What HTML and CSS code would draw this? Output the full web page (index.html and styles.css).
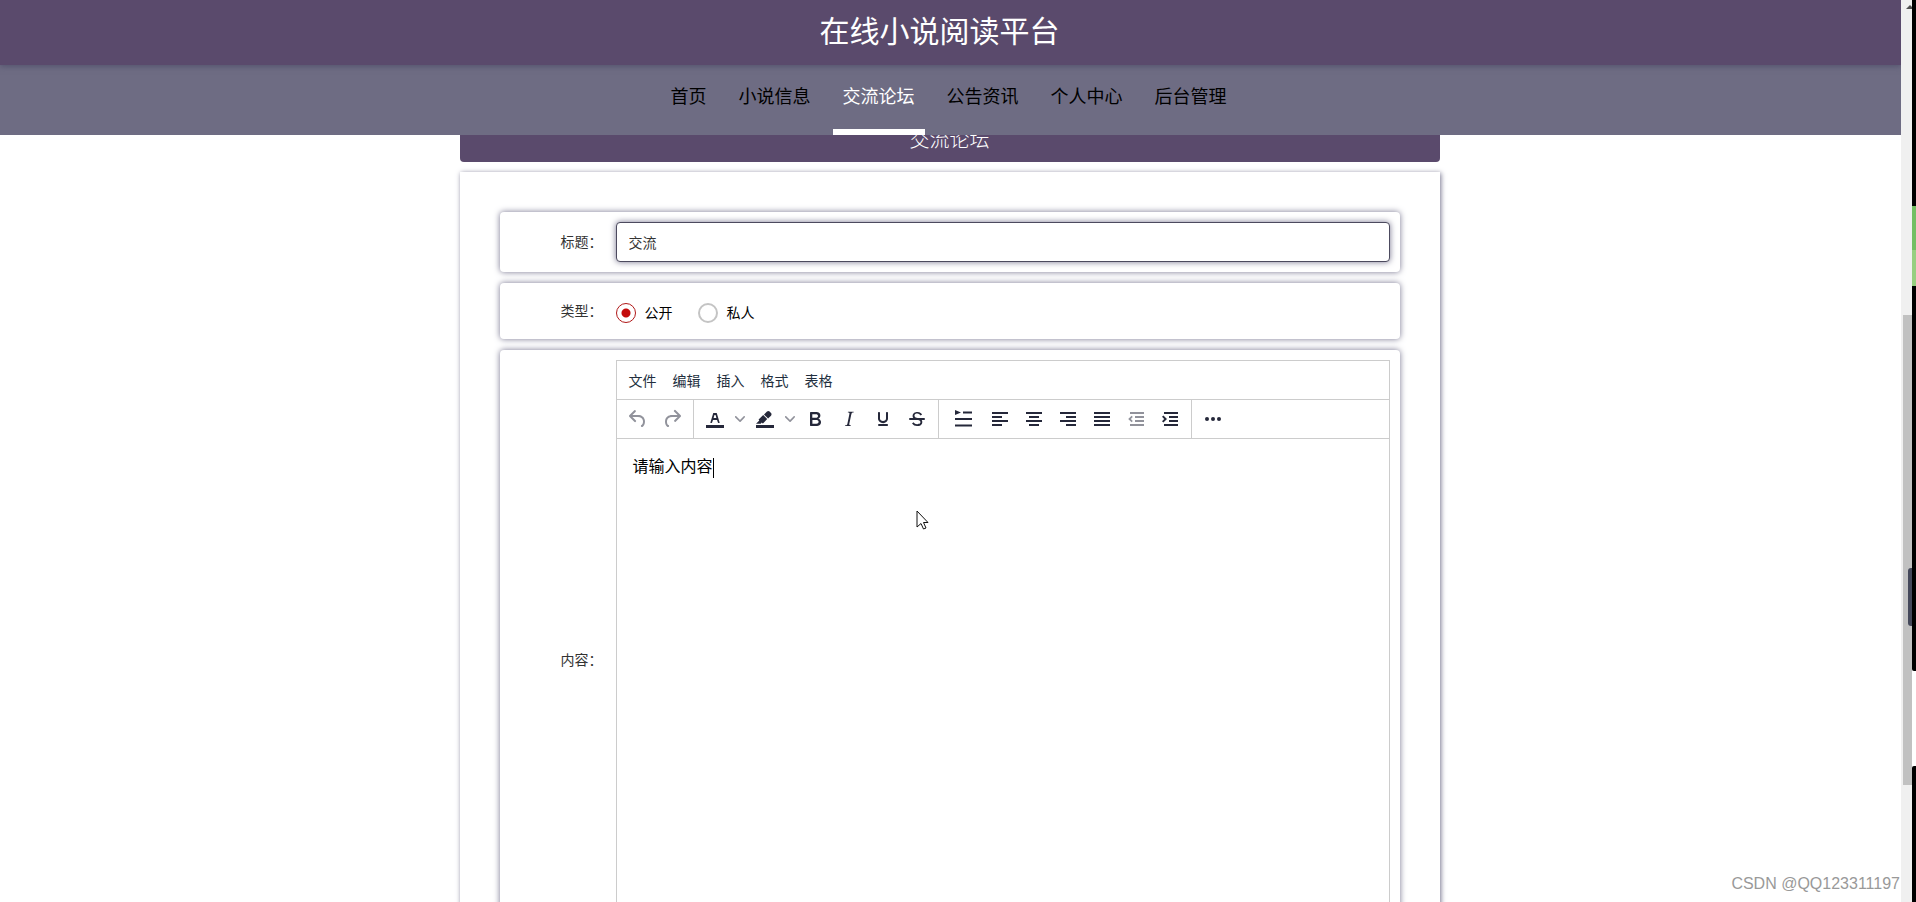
FILE: index.html
```html
<!DOCTYPE html>
<html lang="zh-CN">
<head>
<meta charset="utf-8">
<title>在线小说阅读平台</title>
<link rel="stylesheet" href="styles.css">
</head>
<body>
<div class="window">
  <div class="page">
    <header class="top">
      <h1 class="brand">在线小说阅读平台</h1>
      <nav class="nav">
        <a class="nav-link" href="#">首页</a>
        <a class="nav-link" href="#">小说信息</a>
        <a class="nav-link active" href="#" aria-current="page">交流论坛</a>
        <a class="nav-link" href="#">公告资讯</a>
        <a class="nav-link" href="#">个人中心</a>
        <a class="nav-link" href="#">后台管理</a>
      </nav>
    </header>
    <main class="main">
      <h2 class="banner">交流论坛</h2>
      <form class="card">
        <div class="row">
          <label class="label" for="title">标题：</label>
          <input class="text-input" id="title" type="text" value="交流">
        </div>
        <div class="row" role="radiogroup" aria-labelledby="kind">
          <span class="label" id="kind">类型：</span>
          <div class="radios">
            <label class="radio"><input type="radio" name="kind" checked>公开</label>
            <label class="radio"><input type="radio" name="kind">私人</label>
          </div>
        </div>
        <div class="row">
          <span class="label" id="content-label">内容：</span>
          <div class="editor">
            <div class="menubar">
              <button class="menu" type="button">文件</button>
              <button class="menu" type="button">编辑</button>
              <button class="menu" type="button">插入</button>
              <button class="menu" type="button">格式</button>
              <button class="menu" type="button">表格</button>
            </div>
            <div class="toolbar">
              <div class="group">
                <button class="tool" type="button" aria-label="撤销" disabled><svg class="icon" viewBox="0 0 24 24"><path d="M6.4 8H12c3.7 0 6.2 2 6.8 5.1.6 2.7-.4 5.6-2.3 6.8a1 1 0 0 1-1-1.8c1.1-.6 1.8-2.7 1.4-4.6-.5-2.1-2.1-3.5-4.9-3.5H6.4l3.3 3.3a1 1 0 1 1-1.4 1.4l-5-5a1 1 0 0 1 0-1.4l5-5a1 1 0 0 1 1.4 1.4L6.4 8z"/></svg></button>
                <button class="tool" type="button" aria-label="重做" disabled><svg class="icon" viewBox="0 0 24 24"><path d="M17.6 10H12c-2.8 0-4.4 1.4-4.9 3.5-.4 2 .3 4 1.4 4.6a1 1 0 1 1-1 1.8c-2-1.2-2.9-4.1-2.3-6.8.6-3 3-5.1 6.8-5.1h5.6l-3.3-3.3a1 1 0 1 1 1.4-1.4l5 5a1 1 0 0 1 0 1.4l-5 5a1 1 0 0 1-1.4-1.4l3.3-3.3z"/></svg></button>
              </div>
              <div class="group">
                <button class="tool" type="button" aria-label="文字颜色"><svg class="icon" viewBox="0 0 24 24"><path d="M3 18h18v3H3z"/><path d="M8.7 16h-.8a.5.5 0 0 1-.5-.6l2.7-9c.1-.3.3-.4.5-.4h2.8c.2 0 .4.1.5.4l2.7 9a.5.5 0 0 1-.5.6h-.8a.5.5 0 0 1-.4-.4l-.7-2.2c0-.3-.3-.4-.5-.4h-3.4c-.2 0-.4.1-.5.4l-.7 2.2c0 .3-.2.4-.4.4zm2.6-7.6l-.6 2a.5.5 0 0 0 .5.6h1.6a.5.5 0 0 0 .5-.6l-.6-2c0-.3-.3-.4-.5-.4h-.4c-.2 0-.4.1-.5.4z"/></svg></button>
                <button class="tool chevron" type="button" aria-label="选择文字颜色"><svg class="icon-small" viewBox="0 0 10 10"><path d="M8.7 2.2c.3-.3.8-.3 1 0 .4.4.4.9 0 1.2L5.7 7.8c-.3.3-.9.3-1.2 0L.2 3.4a.8.8 0 0 1 0-1.2c.3-.3.8-.3 1.1 0L5 6l3.7-3.8z"/></svg></button>
                <button class="tool" type="button" aria-label="背景色"><svg class="icon" viewBox="0 0 24 24"><path d="M3 18h18v3H3z"/><path d="M7.7 16.7H3l3.3-3.3-.7-.8L10.2 8l4 4.1-4 4.2c-.2.2-.6.2-.8 0l-.6-.7-1.1 1.1zm5-7.5L11 7.4l3-2.9a2 2 0 0 1 2.6 0L18 6c.7.7.7 2 0 2.7l-2.9 2.9-1.8-1.8-.5-.6z"/></svg></button>
                <button class="tool chevron" type="button" aria-label="选择背景色"><svg class="icon-small" viewBox="0 0 10 10"><path d="M8.7 2.2c.3-.3.8-.3 1 0 .4.4.4.9 0 1.2L5.7 7.8c-.3.3-.9.3-1.2 0L.2 3.4a.8.8 0 0 1 0-1.2c.3-.3.8-.3 1.1 0L5 6l3.7-3.8z"/></svg></button>
                <button class="tool" type="button" aria-label="粗体"><svg class="icon" viewBox="0 0 24 24"><path d="M7.8 19c-.3 0-.5 0-.6-.2l-.2-.5V5.7c0-.2 0-.4.2-.5l.6-.2h5c1.5 0 2.7.3 3.5 1 .7.6 1.1 1.4 1.1 2.5a3 3 0 0 1-.6 1.9c-.4.6-1 1-1.6 1.2.4.1.9.3 1.3.6s.8.7 1 1.2c.4.4.5 1 .5 1.6 0 1.3-.4 2.3-1.3 3-.8.7-2.1 1-3.8 1H7.8zm5-8.3c.6 0 1.2-.1 1.6-.5.4-.3.6-.7.6-1.3 0-1.1-.8-1.7-2.3-1.7H9.3v3.5h3.4zm.5 6c.7 0 1.3-.1 1.7-.4.4-.4.6-.9.6-1.5s-.2-1-.7-1.4c-.4-.3-1-.4-2-.4H9.4v3.8h4z"/></svg></button>
                <button class="tool" type="button" aria-label="斜体"><svg class="icon" viewBox="0 0 24 24"><path d="M16.7 4.7l-.1.9h-.3c-.6 0-1 0-1.4.3-.3.3-.4.6-.5 1.1l-2.1 9.8v.6c0 .5.4.8 1.4.8h.2l-.2.8H8l.2-.8h.2c1.1 0 1.8-.5 2-1.5l2-9.8.1-.5c0-.6-.4-.8-1.4-.8h-.3l.2-.9h5.8z"/></svg></button>
                <button class="tool" type="button" aria-label="下划线"><svg class="icon" viewBox="0 0 24 24"><path d="M16 5c.6 0 1 .4 1 1v5.5a4 4 0 0 1-.4 1.8l-1 1.4a5.3 5.3 0 0 1-5.5 1 5 5 0 0 1-1.6-1c-.5-.4-.8-.9-1.1-1.4a4 4 0 0 1-.4-1.8V6c0-.6.4-1 1-1s1 .4 1 1v5.5c0 .3 0 .6.2 1l.6.7a3.3 3.3 0 0 0 2.2.8 3.4 3.4 0 0 0 2.2-.8c.3-.2.4-.5.6-.8l.2-.9V6c0-.6.4-1 1-1zM8 17h8c.6 0 1 .4 1 1s-.4 1-1 1H8a1 1 0 0 1 0-2z"/></svg></button>
                <button class="tool" type="button" aria-label="删除线"><svg class="icon" viewBox="0 0 24 24"><path d="M15.6 8.5c-.5-.7-1-1.1-1.3-1.3-.6-.4-1.3-.6-2-.6-2.7 0-2.8 1.7-2.8 2.1 0 1.6 1.8 2 3.2 2.3 4.4.9 4.6 2.8 4.6 3.9 0 1.4-.7 4.1-5 4.1A6.2 6.2 0 0 1 7 16.4l1.5-1.1c.4.6 1.6 2 3.7 2 1.6 0 2.5-.4 3-1.2.4-.8.3-2-.8-2.6-.7-.4-1.6-.7-2.9-1-1-.2-3.9-.8-3.9-3.6C7.6 6 10.3 5 12.4 5c2.9 0 4.2 1.6 4.7 2.4l-1.5 1.1z"/><path d="M5 11h14a1 1 0 0 1 0 2H5a1 1 0 0 1 0-2z"/></svg></button>
              </div>
              <div class="group">
                <button class="tool wide" type="button" aria-label="首行缩进"><svg class="icon" viewBox="0 0 24 24"><path d="M4 3l6 2.500-6 2.500zM12 4.500h9v2h-9zM4 11h17v2H4zM4 17.500h17v2H4z"/></svg></button>
                <button class="tool" type="button" aria-label="左对齐"><svg class="icon" viewBox="0 0 24 24"><path d="M4 5h16v2H4zM4 9h10v2H4zM4 13h16v2H4zM4 17h10v2H4z"/></svg></button>
                <button class="tool" type="button" aria-label="居中"><svg class="icon" viewBox="0 0 24 24"><path d="M4 5h16v2H4zM7 9h10v2H7zM4 13h16v2H4zM7 17h10v2H7z"/></svg></button>
                <button class="tool" type="button" aria-label="右对齐"><svg class="icon" viewBox="0 0 24 24"><path d="M4 5h16v2H4zM10 9h10v2H10zM4 13h16v2H4zM10 17h10v2H10z"/></svg></button>
                <button class="tool" type="button" aria-label="两端对齐"><svg class="icon" viewBox="0 0 24 24"><path d="M4 5h16v2H4zM4 9h16v2H4zM4 13h16v2H4zM4 17h16v2H4z"/></svg></button>
                <button class="tool" type="button" aria-label="减少缩进" disabled><svg class="icon" viewBox="0 0 24 24"><path d="M6 5h14v2H6zM11 9h9v2h-9zM11 13h9v2h-9zM6 17h14v2H6zM7.600 8.800l1.200 1.200-2 2 2 2-1.200 1.200L4.200 12z"/></svg></button>
                <button class="tool" type="button" aria-label="增加缩进"><svg class="icon" viewBox="0 0 24 24"><path d="M6 5h14v2H6zM11 9h9v2h-9zM11 13h9v2h-9zM6 17h14v2H6zM5.400 8.400L9 12l-3.600 3.600L4 14.200 6.200 12 4 9.800z"/></svg></button>
              </div>
              <div class="group">
                <button class="tool" type="button" aria-label="更多"><svg class="icon" viewBox="0 0 24 24"><circle cx="6" cy="12" r="2"/><circle cx="12" cy="12" r="2"/><circle cx="18" cy="12" r="2"/></svg></button>
              </div>
            </div>
            <div class="content" role="textbox" aria-multiline="true" aria-labelledby="content-label" contenteditable="true">请输入内容<span class="caret"></span></div>
          </div>
        </div>
      </form>
    </main>
    <div class="watermark">CSDN @QQ123311197</div>
    <svg class="pointer" viewBox="0 0 13 20"><path d="M1 1v16l4-3.500 2.500 5.500 2.500-1-2.500-5.500H12z" fill="#fff" stroke="#111"/></svg>
  </div>
  <div class="scrollbar">
    <svg class="arrow" viewBox="0 0 6 4"><path d="M0 4l4-4 2 2v2z" fill="#505050"/></svg>
    <div class="thumb"><div class="handle"></div></div>
  </div>
  <div class="edge">
    <div class="edge-black"></div>
    <div class="edge-green"></div>
    <div class="edge-black middle"></div>
    <div class="edge-white"></div>
    <div class="edge-black last"></div>
  </div>
</div>
</body>
</html>
```

FILE: styles.css
```css
* { box-sizing: border-box; }
body {
  margin: 0;
  font-family: "Liberation Sans", "Noto Sans CJK SC", sans-serif;
  font-size: 14px;
  font-weight: 400;
  color: #333;
  background: #fff;
}
h1, h2 { margin: 0; }
button, input { font: inherit; color: inherit; }
.window { display: flex; height: 100vh; overflow: hidden; }
.page { position: relative; flex: 1; padding-right: 2px; overflow: hidden; background: #fff; }

.top { position: absolute; top: 0; left: 0; right: 0; z-index: 2; }
.brand {
  position: relative;
  height: 65px;
  padding-right: 22px;
  line-height: 64px;
  text-align: center;
  font-size: 30px;
  font-weight: 400;
  color: #fff;
  background: #5a4a6c;
  box-shadow: 0 1px 6px #50506b;
}
.nav {
  display: flex;
  justify-content: center;
  gap: 12px;
  height: 70px;
  padding-right: 4px;
  background: #6e6c83;
}
.nav-link {
  padding: 0 10px;
  line-height: 64px;
  font-size: 18px;
  color: #000;
  text-decoration: none;
  border-bottom: 6px solid transparent;
}
.nav-link.active { color: #fff; border-bottom-color: #fff; }

.main { max-width: 980px; margin: 0 auto; padding-top: 114px; }
.banner {
  height: 48px;
  margin-bottom: 10px;
  line-height: 52px;
  text-align: center;
  font-family: "Liberation Serif", "Noto Sans CJK SC", serif;
  font-size: 20px;
  font-weight: 300;
  color: #fff;
  background: #5a4a6c;
  border-radius: 4px;
}
.card {
  display: flex;
  flex-direction: column;
  gap: 11px;
  padding: 40px;
  box-shadow: 1px 1px 5px #77758f;
}
.row {
  display: flex;
  align-items: center;
  padding: 10px;
  border-radius: 4px;
  background: #fff;
  box-shadow: 0 0 6px #77758f;
}
.label { width: 106px; padding-right: 13px; text-align: right; line-height: 36px; }
.text-input {
  flex: 1;
  height: 40px;
  padding: 0 12px;
  border: 1px solid #4c4a5e;
  border-radius: 4px;
  outline: none;
  background: #fff;
  box-shadow: 0 0 6px #77758f;
}
.radios { display: flex; gap: 25px; padding-top: 4px; color: #000; }
.radio { display: flex; align-items: center; gap: 9px; line-height: 20px; }
.radio input {
  appearance: none;
  width: 20px;
  height: 20px;
  margin: 0;
  border: 2px solid #c4c4c4;
  border-radius: 50%;
}
.radio input:checked {
  border: 1px solid #b01818;
  background: radial-gradient(circle, #c40c0c 4px, transparent 5px);
}

.editor {
  display: flex;
  flex-direction: column;
  flex: 1;
  height: 600px;
  border: 1px solid #ccc;
  color: #222f3e;
}
.menubar { display: flex; height: 39px; padding: 0 4px; border-bottom: 1px solid #ccc; }
.menu { width: 44px; padding: 0 8px; border: 0; background: none; white-space: nowrap; }
.toolbar { display: flex; height: 39px; border-bottom: 1px solid #ccc; }
.group { display: flex; padding: 0 4px; border-right: 1px solid #ccc; }
.group:last-child { border-right: 0; }
.tool {
  display: flex;
  align-items: center;
  justify-content: center;
  width: 34px;
  padding: 0;
  border: 0;
  background: none;
}
.tool.wide { width: 40px; }
.tool.chevron { width: 16px; opacity: 0.5; }
.tool:disabled { opacity: 0.5; }
.icon { width: 24px; height: 24px; fill: #25283a; flex: none; }
.icon-small { width: 10px; height: 10px; fill: #25283a; flex: none; }
.content { flex: 1; padding: 16px; font-size: 16px; line-height: 24px; color: #000; outline: none; }
.caret { display: inline-block; height: 20px; border-left: 1px solid #000; vertical-align: middle; }

.watermark { position: absolute; right: 1px; bottom: 6px; font-size: 16px; line-height: 24px; color: #999; }
.pointer { position: absolute; left: 916px; top: 510px; width: 13px; height: 20px; }

.scrollbar { position: relative; width: 11px; padding: 5px 0 0 2px; background: #f0f0f0; }
.arrow { display: block; width: 6px; height: 4px; margin-left: 3px; }
.thumb { display: flex; align-items: center; justify-content: flex-end; height: 470px; margin-top: 306px; padding-top: 94px; background: #c1c1c1; }
.handle { width: 4px; height: 58px; border-radius: 3px 0 0 3px; background: #44485a; }
.edge { display: flex; flex-direction: column; width: 4px; background: #fff; }
.edge-black { flex: 206; background: #000; }
.edge-green { flex: 80; background: linear-gradient(#74bf63 55%, #97cf80 55%); }
.edge-black.middle { flex: 385; border-radius: 0 0 0 2px; }
.edge-white { flex: 95; }
.edge-black.last { flex: 136; border-radius: 2px 0 0 0; }
```
